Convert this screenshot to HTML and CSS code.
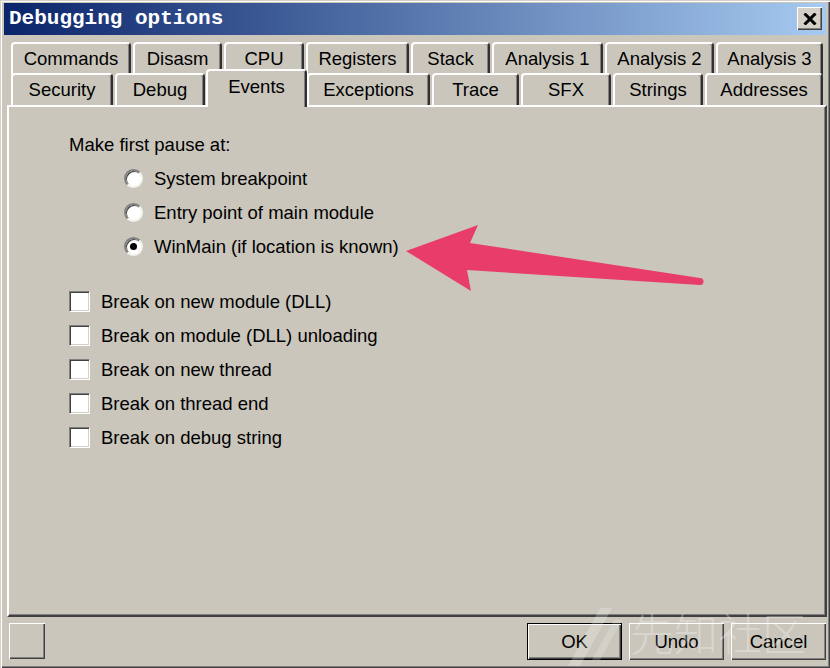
FILE: index.html
```html
<!DOCTYPE html>
<html>
<head>
<meta charset="utf-8">
<link rel="stylesheet" href="styles.css">
</head>
<body>
<div class="window">
  <div class="titlebar">
    <span class="title">Debugging options</span>
    <div class="close">
      <svg width="14" height="12" viewBox="0 0 14 12"><path d="M1.5 0.5 L12.5 11.5 M12.5 0.5 L1.5 11.5" stroke="#000" stroke-width="3" fill="none"/></svg>
    </div>
  </div>
  <div class="tabs">
    <div class="tabrow back">
      <div class="tab">Commands</div>
      <div class="tab">Disasm</div>
      <div class="tab">CPU</div>
      <div class="tab">Registers</div>
      <div class="tab">Stack</div>
      <div class="tab">Analysis 1</div>
      <div class="tab">Analysis 2</div>
      <div class="tab">Analysis 3</div>
    </div>
    <div class="tabrow front">
      <div class="tab">Security</div>
      <div class="tab">Debug</div>
      <div class="tab active">Events</div>
      <div class="tab">Exceptions</div>
      <div class="tab">Trace</div>
      <div class="tab">SFX</div>
      <div class="tab">Strings</div>
      <div class="tab">Addresses</div>
    </div>
  </div>
  <div class="panel">
    <div class="row">Make first pause at:</div>
    <div class="radios">
      <div class="row"><span class="radio"></span>System breakpoint</div>
      <div class="row"><span class="radio"></span>Entry point of main module</div>
      <div class="row"><span class="radio checked"></span>WinMain (if location is known)</div>
    </div>
    <div class="checks">
      <div class="row"><span class="check"></span>Break on new module (DLL)</div>
      <div class="row"><span class="check"></span>Break on module (DLL) unloading</div>
      <div class="row"><span class="check"></span>Break on new thread</div>
      <div class="row"><span class="check"></span>Break on thread end</div>
      <div class="row"><span class="check"></span>Break on debug string</div>
    </div>
  </div>
  <div class="footer">
    <div class="status"></div>
    <div class="buttons">
      <div class="btn default">OK</div>
      <div class="btn">Undo</div>
      <div class="btn">Cancel</div>
    </div>
  </div>
  <svg class="arrow" width="830" height="668" viewBox="0 0 830 668">
    <polygon points="406,251 478,225 470,243 700,278 700,285 467,270 471,291" fill="#e83d6b"/>
    <circle cx="700" cy="281.5" r="3.5" fill="#e83d6b"/>
  </svg>
  <svg class="wmlogo" width="60" height="62" viewBox="0 0 60 62">
    <polygon points="34,2 46,2 14,60 2,60" fill="rgba(255,255,255,0.22)"/>
    <polygon points="48,14 56,14 34,54 26,54" fill="rgba(255,255,255,0.18)"/>
  </svg>
  <div class="watermark">先知社区</div>
</div>
</body>
</html>
```
FILE: styles.css
```css
* { box-sizing: border-box; }
html, body { margin: 0; padding: 0; }
body {
  background: #cac6bc;
  font-family: "Liberation Sans", Arial, sans-serif;
  font-size: 18.5px;
  color: #000;
}
.window {
  position: relative;
  width: 830px;
  height: 668px;
  padding: 3px;
  background: #cac6bc;
  display: flex;
  flex-direction: column;
  box-shadow: inset 1px 1px #d4d0c8, inset 2px 2px #fff, inset -1px -1px #404040, inset -2px -2px #808080;
  overflow: hidden;
}
.titlebar {
  height: 32px;
  margin: 0 1px;
  background: linear-gradient(to right, #0a246a, #a6caf0);
  display: flex;
  align-items: center;
  justify-content: space-between;
  padding: 0 4px 0 5px;
}
.title {
  font-family: "Liberation Mono", "Courier New", monospace;
  font-weight: bold;
  font-size: 21px;
  color: #fff;
  letter-spacing: 0;
}
.close {
  width: 25px;
  height: 23px;
  background: #d4d0c8;
  display: flex;
  align-items: center;
  justify-content: center;
  box-shadow: inset 1px 1px #fff, inset -1px -1px #404040, inset -2px -2px #808080;
}
.tabs {
  margin-top: 7px;
  padding-left: 8px;
}
.tabrow {
  display: grid;
  gap: 2px;
}
.tabrow.back {
  grid-template-columns: 120px 89px 80px 103px 79px 111px 109px 107px;
  height: 31px;
}
.tabrow.front {
  grid-template-columns: 102px 90px 98px 123px 87px 90px 90px 118px;
  height: 32px;
}
.tab {
  background: #cac6bc;
  border-top: 2px solid #fff;
  border-left: 2px solid #fff;
  border-right: 2px solid #303030;
  border-radius: 4px 4px 0 0;
  box-shadow: inset -1px 0 #808080;
  display: flex;
  align-items: center;
  justify-content: center;
  white-space: nowrap;
}
.tabrow.back .tab { height: 33px; }
.tab.active {
  position: relative;
  z-index: 2;
  margin: -4px -2px -2px -1px;
  height: 38px;
  padding-bottom: 4px;
}
.panel {
  height: 513px;
  margin-left: 4px;
  border-top: 2px solid #fff;
  border-left: 2px solid #fff;
  border-right: 2px solid #404040;
  border-bottom: 2px solid #404040;
  box-shadow: inset -1px -1px #808080;
  padding: 21px 0 0 60px;
}
.row {
  height: 34px;
  display: flex;
  align-items: center;
  white-space: nowrap;
}
.radios { padding-left: 55px; }
.checks { margin-top: 21px; }
.radio {
  width: 19px;
  height: 19px;
  border-radius: 50%;
  background: #fff;
  border: 2px solid;
  border-color: #808080 #f4f2ee #f4f2ee #808080;
  box-shadow: inset 1px 1px 0 #404040;
  margin-right: 11px;
  display: flex;
  align-items: center;
  justify-content: center;
}
.radio.checked::after {
  content: "";
  width: 7px;
  height: 7px;
  border-radius: 50%;
  background: #000;
}
.check {
  width: 21px;
  height: 21px;
  background: #fff;
  border: 1px solid;
  border-color: #808080 #fff #fff #808080;
  box-shadow: inset 1px 1px #404040, inset -1px -1px #d4d0c8;
  margin-right: 11px;
}
.footer {
  height: 48px;
  display: flex;
  align-items: flex-start;
  padding-top: 6px;
}
.status {
  width: 36px;
  height: 36px;
  margin-left: 6px;
  box-shadow: inset 1px 1px #fff, inset -1px -1px #404040, inset -2px -2px #808080;
}
.buttons {
  margin-left: auto;
  margin-right: 1px;
  display: flex;
  gap: 7px;
}
.btn {
  width: 95px;
  height: 37px;
  display: flex;
  align-items: center;
  justify-content: center;
  box-shadow: inset 1px 1px #fff, inset -1px -1px #404040, inset -2px -2px #808080;
}
.btn.default {
  box-shadow: inset 0 0 0 1px #000, inset 2px 2px #fff, inset -2px -2px #404040, inset -3px -3px #808080;
}
.arrow {
  position: absolute;
  left: 0;
  top: 0;
  pointer-events: none;
}
.wmlogo {
  position: absolute;
  left: 566px;
  top: 606px;
  pointer-events: none;
}
.watermark {
  position: absolute;
  left: 630px;
  top: 604px;
  font-family: "Noto Sans CJK SC", sans-serif;
  font-weight: 300;
  font-size: 44px;
  line-height: 1.3;
  letter-spacing: 0;
  color: rgba(255, 255, 255, 0.3);
  pointer-events: none;
  white-space: nowrap;
}
```
